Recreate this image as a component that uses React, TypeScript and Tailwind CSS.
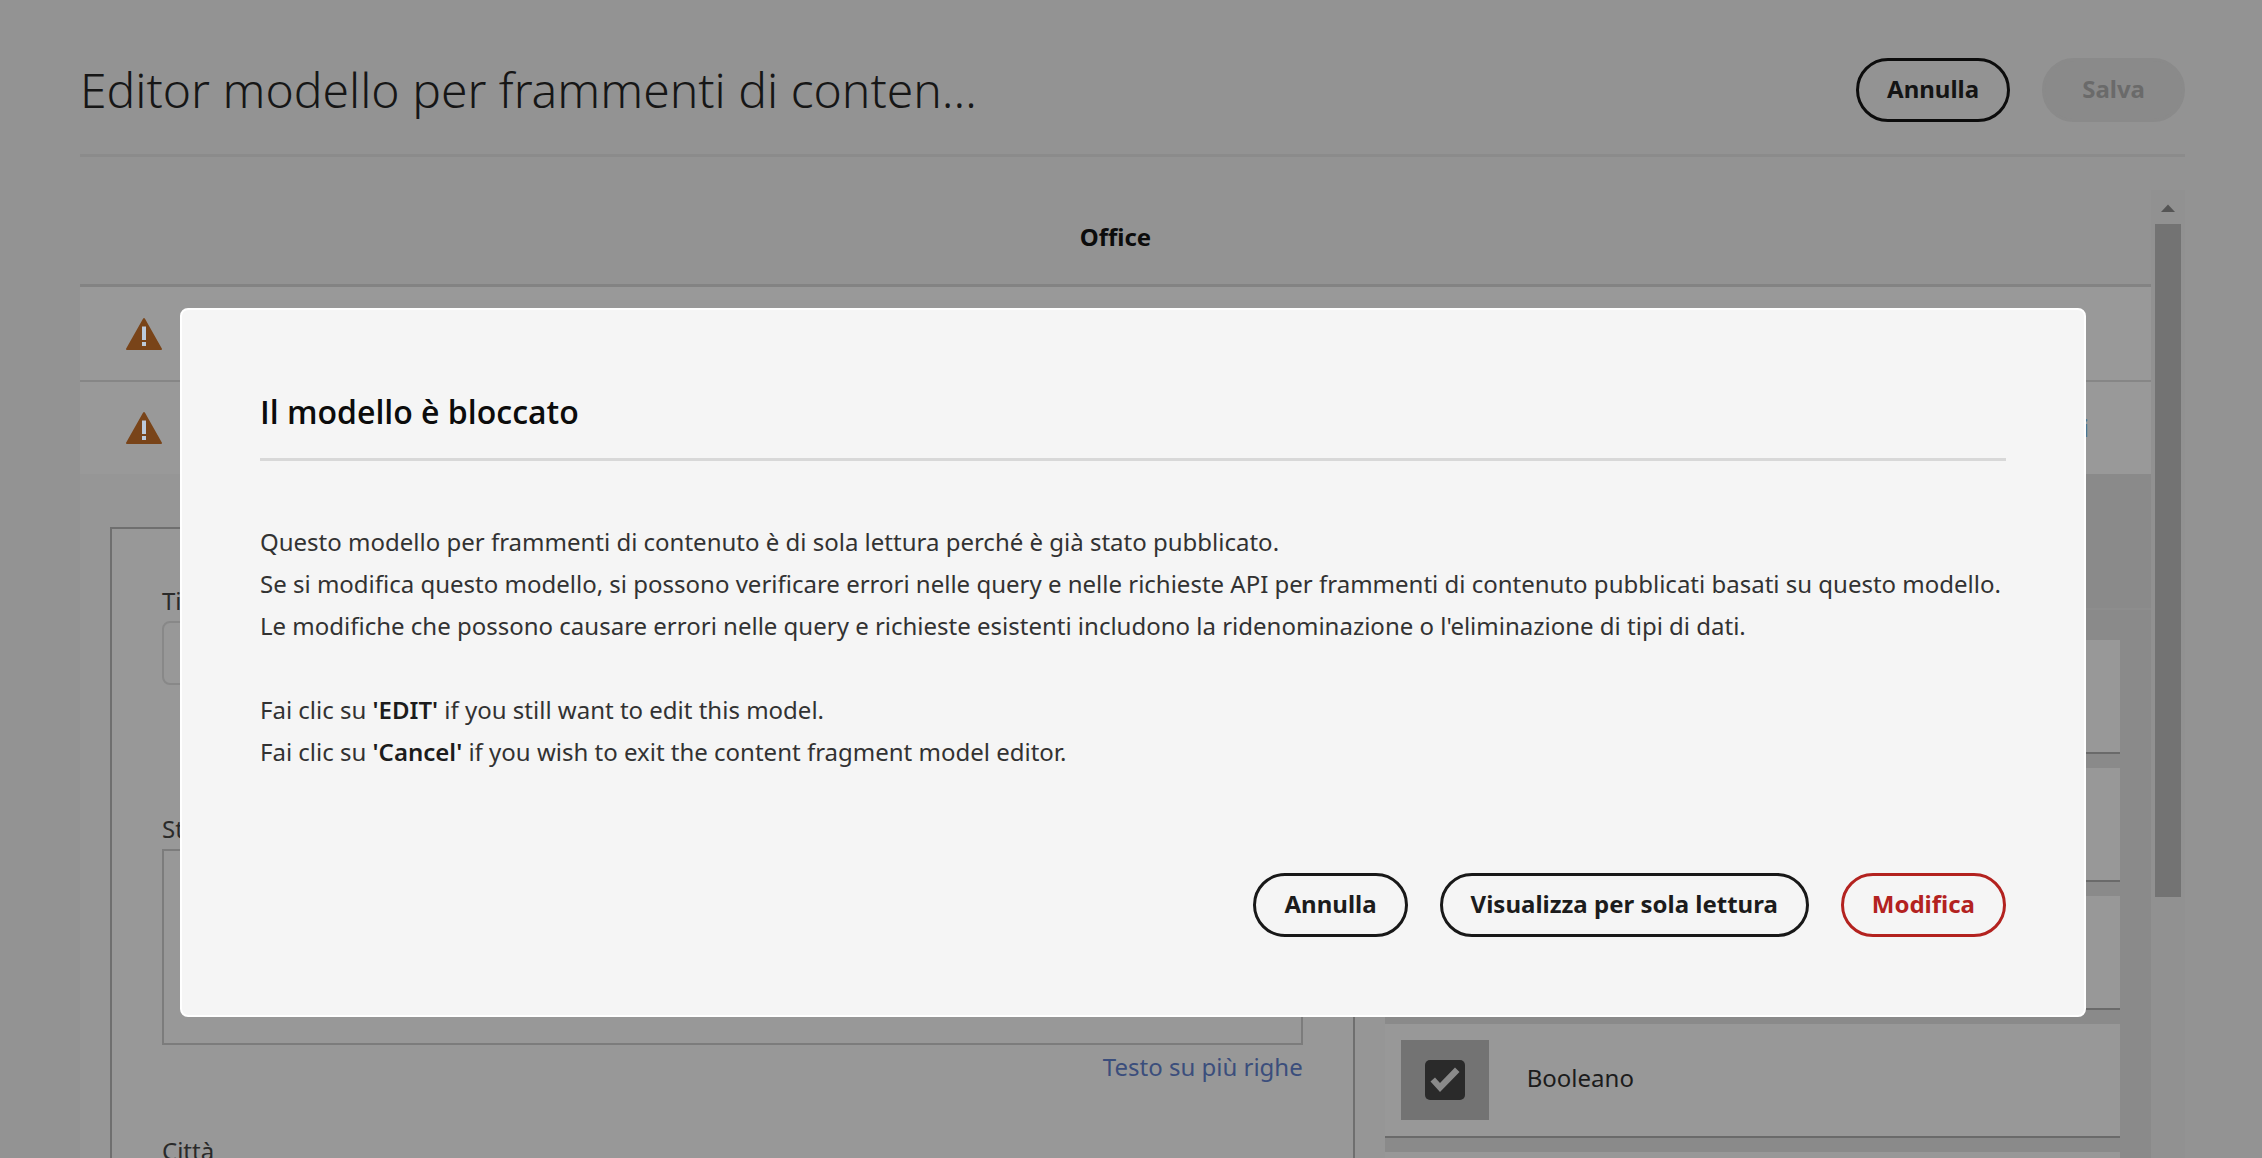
import React from "react";

function WarningIcon() {
  return (
    <svg viewBox="0 0 36 32" className="h-8 w-9 shrink-0" aria-label="Avviso" role="img">
      <path d="M17 .8a1.2 1.2 0 0 1 2 0L35.8 30.4a1 1 0 0 1-.9 1.6H1.1a1 1 0 0 1-.9-1.6Z" fill="#794419" />
      <rect x="16" y="8.5" width="4" height="13.500" fill="#bccadb" />
      <rect x="16" y="24" width="4" height="4" fill="#bccadb" />
    </svg>
  );
}

function CheckIcon() {
  return (
    <svg viewBox="0 0 40 40" className="h-10 w-10" aria-hidden="true">
      <rect width="40" height="40" rx="5" fill="#2a2a2a" />
      <path d="M5.500 21.500 10 17.500l5 5.500L30 7.500l4.500 4.500L15 32Z" fill="#8a8a8a" />
    </svg>
  );
}

function PillButton({ children, tone = "default" }: { children: React.ReactNode; tone?: "default" | "muted" | "danger" | "dim" }) {
  const tones = {
    default: "border-[#181818] px-7 text-[#1c1c1c]",
    dim: "border-[#0c0c0c] px-7 text-[#141414]",
    muted: "border-[#8a8a8a] bg-[#8a8a8a] px-[37px] text-[#6a6a6a]",
    danger: "border-[#b3221f] px-7 text-[#b3221f]",
  };
  return (
    <button
      type="button"
      disabled={tone === "muted"}
      className={`h-16 shrink-0 rounded-full border-3 pb-0.5 text-2xl font-bold whitespace-nowrap ${tones[tone]}`}
    >
      {children}
    </button>
  );
}

const dataTypes = ["Testo su riga singola", "Testo su più righe", "Numero", "Booleano", "Data e ora"];

function DataType({ name }: { name: string }) {
  return (
    <li className="flex h-[114px] shrink-0 items-center border-b-2 border-[#6a6a6a] bg-[#989898] pl-4">
      <span className="flex h-20 w-[88px] items-center justify-center bg-[#737373]">
        <CheckIcon />
      </span>
      <span className="pb-1 pl-[38px] text-2xl text-[#1c1c1c]">{name}</span>
    </li>
  );
}

export default function App() {
  return (
    <div className="relative h-screen overflow-hidden bg-[#939393] font-['Noto_Sans',sans-serif]">
      <div className="flex h-full flex-col pr-[77px] pl-20">
        <header className="mt-[58px] flex shrink-0 items-center justify-between border-b-3 border-[#8b8b8b] pb-8">
          <h1 className="truncate text-5xl leading-[64px] font-light text-[#161616]">Editor modello per frammenti di conten…</h1>
          <div className="flex gap-8">
            <PillButton tone="dim">Annulla</PillButton>
            <PillButton tone="muted">Salva</PillButton>
          </div>
        </header>

        <div className="mt-[33px] flex min-h-0 flex-1">
          <main className="flex min-w-0 flex-1 flex-col overflow-hidden">
            <h2 className="shrink-0 border-b-3 border-[#838383] text-center text-2xl leading-[94px] font-bold text-[#0c0c0c]">
              Office
            </h2>
            <div className="flex h-[95px] shrink-0 items-center border-b-2 border-[#868686] bg-[#999999] px-[46px]">
              <WarningIcon />
            </div>
            <div className="flex h-[92px] shrink-0 items-center justify-between bg-[#999999] pr-[62px] pl-[46px]">
              <WarningIcon />
              <a href="#dettagli" className="text-2xl text-[#4a7290]">Dettagli</a>
            </div>

            <div className="flex min-h-0 flex-1">
              <div className="flex min-w-0 flex-1 bg-[#969696] px-[30px] pt-[53px]">
                <form className="flex flex-1 flex-col border-2 border-b-0 border-[#6f6f6f] bg-[#989898] px-[50px] pt-14 text-2xl leading-8 text-[#2a2a2a]">
                  <label htmlFor="title">Titolo</label>
                  <input id="title" className="mt-1 h-16 shrink-0 rounded-lg border-2 border-[#888888]" />
                  <label htmlFor="street" className="mt-32">Strada</label>
                  <textarea id="street" className="mt-1 h-[196px] shrink-0 resize-none border-2 border-[#7c7c7c]" />
                  <a href="#testo" className="mt-1.5 self-end text-[#3b4e7c]">Testo su più righe</a>
                  <label htmlFor="city" className="mt-[52px]">Città</label>
                  <input id="city" className="mt-1 h-16 shrink-0 rounded-lg border-2 border-[#888888]" />
                </form>
              </div>
              <aside className="flex w-[37%] flex-col bg-[#8a8a8a]">
                <div className="h-[136px] shrink-0 border-b-2 border-[#8d8d8d]" />
                <ul className="flex flex-col gap-[14px] pt-[30px] pr-[31px]">
                  {dataTypes.map((name) => (
                    <DataType key={name} name={name} />
                  ))}
                </ul>
              </aside>
            </div>
          </main>

          <div className="flex w-[34px] shrink-0 flex-col items-center bg-[#919191]">
            <svg viewBox="0 0 34 34" className="h-[34px] w-[34px] shrink-0" aria-hidden="true">
              <path d="M10 22 17 14.500 24 22Z" fill="#555555" />
            </svg>
            <div className="h-[69.5%] w-[26px] bg-[#737373]" />
          </div>
        </div>
      </div>

      <div className="absolute inset-0 pt-[308px] pr-[176px] pl-[180px]">
        <section role="dialog" aria-labelledby="dialog-title" className="rounded-lg border-2 border-white bg-[#f5f5f5] p-[78px]">
          <h2 id="dialog-title" className="border-b-3 border-[#d8d8d8] pb-[22px] font-['Open_Sans',sans-serif] text-[32px] leading-[48px] font-semibold text-[#0c0c0c]">
            Il modello è bloccato
          </h2>
          <div className="pt-[60px] text-2xl leading-[42px] text-[#323232]">
            <p>Questo modello per frammenti di contenuto è di sola lettura perché è già stato pubblicato.</p>
            <p className="whitespace-nowrap">
              Se si modifica questo modello, si possono verificare errori nelle query e nelle richieste API per frammenti di contenuto pubblicati basati su questo modello.
            </p>
            <p>Le modifiche che possono causare errori nelle query e richieste esistenti includono la ridenominazione o l'eliminazione di tipi di dati.</p>
            <p className="mt-[42px]">
              Fai clic su <strong className="font-semibold text-[#1c1c1c]">'EDIT'</strong> if you still want to edit this model.
            </p>
            <p>
              Fai clic su <strong className="font-semibold text-[#1c1c1c]">'Cancel'</strong> if you wish to exit the content fragment model editor.
            </p>
          </div>
          <div className="mt-[100px] flex justify-end gap-8">
            <PillButton>Annulla</PillButton>
            <PillButton>Visualizza per sola lettura</PillButton>
            <PillButton tone="danger">Modifica</PillButton>
          </div>
        </section>
      </div>
    </div>
  );
}
